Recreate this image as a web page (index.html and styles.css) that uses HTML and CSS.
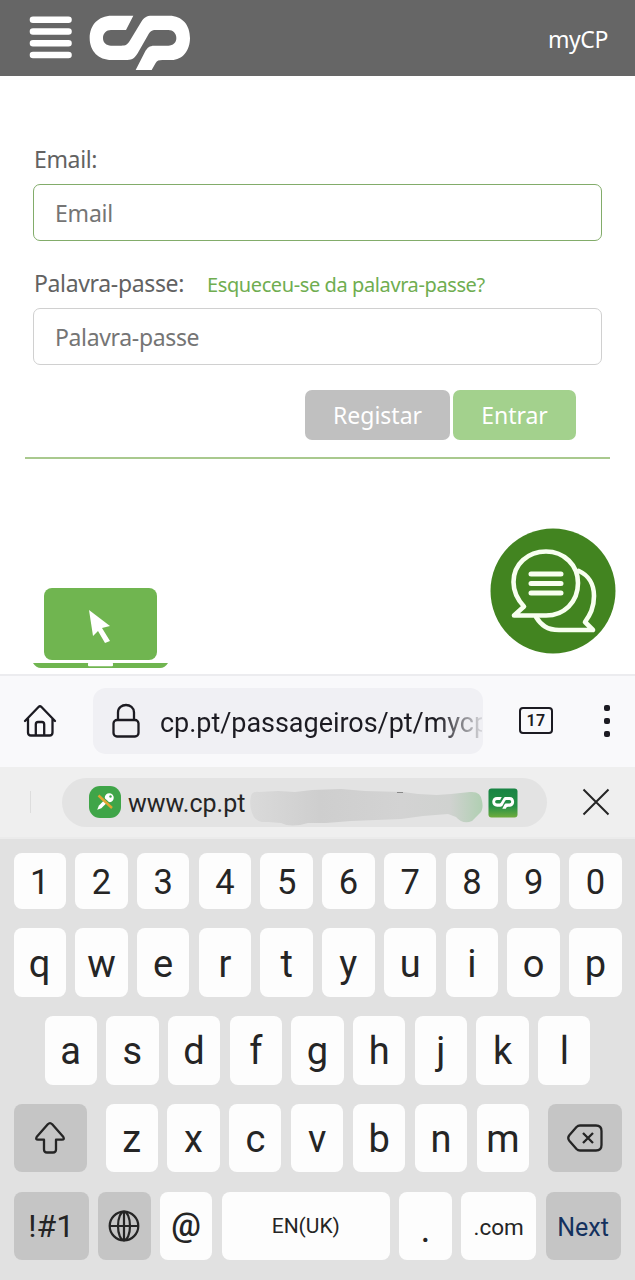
FILE: index.html
```
<!DOCTYPE html>
<html lang="pt">
<head>
<meta charset="utf-8">
<title>myCP</title>
<link rel="stylesheet" href="styles.css">
</head>
<body>
<header class="header">
  <svg class="burger" width="44" height="46" viewBox="0 0 44 46"><path d="M4 4.700H39.500M4 16.500H39.500M4 28.200H39.500M4 40H39.500" stroke="#fff" stroke-width="6.600" stroke-linecap="round"/></svg>
  <svg class="logo" width="102" height="56" viewBox="267 46 306 168"><path fill="#fff" d="M400 48H335C295 48 269 76 269 115C269 154 295 181 335 181H382C398 181 405 174 413 161L443 108C450 96 455 91 467 91H505C519 91 529 101 529 115C529 129 519 138 505 138H463C448 138 442 144 435 156L407 211H455L467 190C471 183 477 181 487 181H515C547 181 570 153 570 115C570 76 547 48 508 48H455C440 48 432 53 424 66L389 124C382 135 377 138 364 138H333C319 138 309 129 309 115C309 101 319 91 333 91H378Z"/></svg>
  <span class="account">myCP</span>
</header>
<main class="page">
  <form class="login">
    <label class="label email-label">Email:</label>
    <div class="field active"><span class="ph-email">Email</span></div>
    <div class="row"><label class="label pass-label">Palavra-passe:</label><a class="forgot">Esqueceu-se da palavra-passe?</a></div>
    <div class="field"><span class="ph-pass">Palavra-passe</span></div>
    <div class="buttons"><span class="btn register">Registar</span><span class="btn enter">Entrar</span></div>
  </form>
  <svg class="laptop" width="136" height="84" viewBox="0 0 136 84"><rect x="11" y="1" width="113" height="72" rx="8" fill="#70b550"/><path d="M0 76H135Q132 81 127 81H8Q3 81 0 76Z" fill="#70b550"/><rect x="55" y="75.500" width="25" height="3.700" rx="1" fill="#fff"/><path fill="#fff" d="M56 23L77 39L69 41L77 54L72 56L65 44L60 49Z"/></svg>
  <svg class="chat" width="126" height="126" viewBox="0 0 126 126"><circle cx="63" cy="63" r="62.500" fill="#428420"/><g fill="none" stroke="#f8fff0" stroke-width="4.600" stroke-linejoin="round" stroke-linecap="round"><path d="M24 87.500L34 78.500C27 71 23.500 63 23.500 54C23.500 36 38 23.500 56 23.500C74 23.500 88 37 88 55C88 74 74 88 55 87.500Z"/><path d="M89 43C98 47 104 56 104 68C104 80 100 87 95 94L103 102H69C57 102 51 97 46 89"/><path d="M41 46H71M41 55.500H71M41 65H71" stroke-width="5"/></g></svg>
</main>
<nav class="browser">
  <svg class="home" width="34" height="34" viewBox="0 0 34 34" fill="none" stroke="#1c1b22" stroke-width="2.300" stroke-linecap="round" stroke-linejoin="round"><path d="M2 17L15.500 3Q17 1.600 18.500 3L32 17M5 14.500V28.500Q5 31.500 8 31.500H26.500Q29.500 31.500 29.500 28.500V14.500M12.800 31V20.500Q12.800 18 15 18H19Q21.200 18 21.200 20.500V31"/></svg>
  <div class="address"><svg width="28" height="36" viewBox="0 0 28 36" fill="none" stroke="#1c1b22" stroke-width="2.300"><rect x="1.500" y="17" width="25" height="16.500" rx="3.500"/><path d="M6 17V9.500C6 -0.500 22 -0.500 22 9.500V17"/></svg><span class="url">cp.pt/passageiros/pt/mycp</span></div>
  <span class="tabs">17</span>
  <span class="dots"><i></i><i></i><i></i></span>
</nav>
<section class="suggest">
  <i class="divider"></i>
  <div class="pill">
    <svg class="keyicon" width="32" height="32" viewBox="0 0 32 32"><rect width="32" height="32" rx="11" fill="#3fa548"/><g transform="rotate(45 16 16)" fill="#fff"><circle cx="16" cy="10" r="4.500"/><path d="M14.200 13H17.800V23L16 27L14.200 23Z"/></g><circle cx="21.500" cy="10.500" r="1.200" fill="#3fa548"/><path d="M10 8.500L24 21" stroke="#3fa548" stroke-width="2"/><path d="M9.500 9.500L23 22" stroke="#e1a632" stroke-width="2.400"/></svg>
    <span class="site">www.cp.pt</span>
    <svg class="smudge" width="234" height="38" viewBox="0 0 234 38"><defs><linearGradient id="s"><stop stop-color="#dadada"/><stop offset=".3" stop-color="#cecece"/><stop offset=".65" stop-color="#d3d3d3"/><stop offset=".86" stop-color="#d0d2d0"/><stop offset="1" stop-color="#b0cfb2"/></linearGradient></defs><path fill="url(#s)" d="M1 8Q2 3 9 4L28 3L45 4L62 2L91 1L115 3L153 4L168 6L187 7L201 6L220 4Q231 3 232 13Q234 22 229 26L222 33Q213 37 206 29L198 26L173 28L151 31L126 32L101 33L76 35L58 35Q41 40 31 35L18 34Q5 35 2 25Q-1 17 1 8Z"/><path d="M147 4.500H153" stroke="#888" stroke-width="1"/></svg>
    <svg class="cpicon" width="30" height="30" viewBox="0 0 30 30"><defs><linearGradient id="g" x2="0" y2="1"><stop stop-color="#188344"/><stop offset=".62" stop-color="#269045"/><stop offset="1" stop-color="#6fac3d"/></linearGradient></defs><rect x=".5" y=".5" width="29" height="29" rx="3" fill="url(#g)"/><g transform="translate(-15.300 5.500) scale(.0727)"><path fill="#fff" d="M400 48H335C295 48 269 76 269 115C269 154 295 181 335 181H382C398 181 405 174 413 161L443 108C450 96 455 91 467 91H505C519 91 529 101 529 115C529 129 519 138 505 138H463C448 138 442 144 435 156L407 211H455L467 190C471 183 477 181 487 181H515C547 181 570 153 570 115C570 76 547 48 508 48H455C440 48 432 53 424 66L389 124C382 135 377 138 364 138H333C319 138 309 129 309 115C309 101 319 91 333 91H378Z"/></g></svg>
  </div>
  <svg class="close" width="28" height="28" viewBox="0 0 28 28"><path d="M1.500 1.500L26.500 26.500M26.500 1.500L1.500 26.500" stroke="#252525" stroke-width="2"/></svg>
</section>
<section class="keyboard">
  <div class="keys digits"><b>1</b><b>2</b><b>3</b><b>4</b><b>5</b><b>6</b><b>7</b><b>8</b><b>9</b><b>0</b></div>
  <div class="keys"><b>q</b><b>w</b><b>e</b><b>r</b><b>t</b><b>y</b><b>u</b><b>i</b><b>o</b><b>p</b></div>
  <div class="keys home-row"><b>a</b><b>s</b><b>d</b><b>f</b><b>g</b><b>h</b><b>j</b><b>k</b><b>l</b></div>
  <div class="keys shift-row"><b class="dark"><svg width="32" height="34" viewBox="0 0 32 34" fill="none" stroke="#252525" stroke-width="2.300" stroke-linejoin="round"><path d="M13.800 3.200Q16 1 18.200 3.200L29.200 15.800Q30.800 18.700 28 18.700H22V28.500Q22 31.500 19 31.500H13Q10 31.500 10 28.500V18.700H4Q1.200 18.700 2.800 15.800Z"/></svg></b><div class="mid"><b>z</b><b>x</b><b>c</b><b>v</b><b>b</b><b>n</b><b>m</b></div><b class="dark"><svg width="36" height="28" viewBox="0 0 36 28" fill="none" stroke="#252525" stroke-width="2.300" stroke-linejoin="round"><path d="M13 1.500H29Q34.500 1.500 34.500 7V21Q34.500 26.500 29 26.500H13Q11 26.500 9.500 25L2.500 17Q0 14 2.500 11L9.500 3Q11 1.500 13 1.500Z"/><path d="M16 9L26 19M26 9L16 19"/></svg></b></div>
  <div class="keys bottom"><b class="dark symbols">!#1</b><b class="dark"><svg width="32" height="32" viewBox="0 0 32 32" fill="none" stroke="#252525" stroke-width="2.200"><circle cx="16" cy="16" r="14.300"/><ellipse cx="16" cy="16" rx="6" ry="14.300"/><path d="M16 1.700V30.300M1.700 16H30.300"/></svg></b><b class="at">@</b><b class="space">EN(UK)</b><b class="dot">.</b><b class="com">.com</b><b class="dark next">Next</b></div>
</section>
</body>
</html>
```

FILE: styles.css
```
* { box-sizing: border-box; }
body { margin: 0; width: 635px; height: 1280px; overflow: hidden; background: #fff; font-family: Roboto, sans-serif; color: #252525; }
svg { display: block; flex: none; }
span, a, label { white-space: nowrap; }

.header { height: 76px; background: #666; display: flex; align-items: flex-start; padding: 15px 27px 0 29px; font-family: "Noto Sans", sans-serif; }
.logo { margin-left: 16px; }
.account { margin-left: auto; color: #fff; font-size: 23px; line-height: 48px; letter-spacing: -0.4px; }

.page { height: 598px; position: relative; padding: 66px 25px 0; font-family: "Noto Sans", sans-serif; color: #626262; }
.login { height: 317px; border-bottom: 2px solid #a9c98e; padding: 0 8px; }
.label { display: block; font-size: 23px; line-height: 34px; padding-left: 1px; }
.email-label { letter-spacing: -0.35px; }
.field { height: 57px; border: 1px solid #d0d0d0; border-radius: 7px; padding-left: 21px; font-size: 23px; line-height: 57px; color: #757575; }
.field.active { border-color: #82ac6a; }
.login > .email-label { margin-bottom: 8px; }
.ph-email { letter-spacing: -0.2px; }
.row { display: flex; margin-top: 25px; height: 42px; }
.pass-label { letter-spacing: -0.35px; width: 173px; }
.ph-pass { letter-spacing: -0.35px; }
.forgot { font-size: 20px; line-height: 37px; letter-spacing: -0.4px; padding-left: 1px; color: #6fad50; }
.buttons { display: flex; justify-content: flex-end; gap: 3px; padding: 25px 26px 0 0; }
.btn { height: 50px; border-radius: 7px; color: #fff; font-size: 23px; line-height: 51px; text-align: center; }
.register { width: 145px; background: #c0c0c0; }
.enter { width: 123px; background: #a3d18d; }
.laptop { margin: 128px 0 0 8px; }
.chat { position: absolute; left: 490px; top: 452px; }

.browser { height: 93px; background: #f9f9fb; border-top: 2px solid #ececef; display: flex; align-items: center; padding: 0 24px 2px 23px; }
.address { margin-left: 36px; width: 390px; height: 66px; border-radius: 13px; background: #f0f0f4; display: flex; align-items: center; padding-left: 19px; overflow: hidden; }
.url { margin-left: 20px; width: 322px; overflow: hidden; font-size: 27px; line-height: 40px; padding-top: 5px; letter-spacing: -0.04px; color: transparent; background: linear-gradient(90deg, #1c1b22 86%, #d8d8dc 100%); background-clip: text; -webkit-background-clip: text; }
.tabs { margin-left: 36px; width: 34px; height: 27px; border: 2px solid #1c1b22; border-radius: 4px; text-align: center; font-size: 16px; line-height: 23px; font-weight: 600; letter-spacing: 0.4px; color: #1c1b22; }
.dots { margin-left: 50px; width: 8px; display: grid; gap: 7px; justify-items: center; }
.dots i { width: 6px; height: 6px; border-radius: 2px; background: #1c1b22; }

.suggest { height: 72px; background: #efefef; display: flex; align-items: center; padding-left: 30px; border-bottom: 2px solid #ebebeb; }
.divider { width: 1px; height: 22px; background: #ddd; }
.pill { margin-left: 31px; width: 485px; height: 49px; border-radius: 25px; background: #e3e3e3; display: flex; align-items: center; padding-left: 27px; }
.site { margin-left: 7px; width: 117px; font-size: 25px; letter-spacing: 0; line-height: 49px; padding-top: 3px; }
.smudge { margin-left: 5px; margin-top: 10px; }
.cpicon { margin-left: 4px; margin-top: 1px; }
.close { margin-left: 35px; }

.keyboard { height: 441px; background: #e1e1e1; padding: 14px 13.5px 0; display: flex; flex-direction: column; gap: 19.3px; }
.keys { display: grid; grid-template-columns: repeat(10, 1fr); gap: 9.4px; height: 68.5px; flex: none; }
.keys b { font-weight: 400; background: #fdfdfd; border-radius: 8px; display: flex; align-items: center; justify-content: center; font-size: 38px; line-height: 1; padding-top: 2px; }
.keys.digits { height: 56px; }
.digits b { font-size: 34.500px; padding-top: 3px; }
.home-row { grid-template-columns: repeat(9, 1fr); padding: 0 31px; }
.home-row b { padding-top: 1px; }
.keys.shift-row { grid-template-columns: 73.500px 423.500px 74px; gap: 18.500px; }
.mid { display: grid; grid-template-columns: repeat(7, 1fr); gap: 9.700px; }
.mid b { padding-top: 1px; }
.keys.bottom { grid-template-columns: 75.500px 52.500px 52.500px 168.500px 52.500px 75.500px 75px; gap: 9.200px; }
.keys .dark { background: #c5c5c5; padding-top: 0; }
.keys .symbols { font-size: 32px; }
.keys .at { font-size: 33px; font-weight: 500; padding-top: 0; padding-bottom: 3px; }
.keys .space { font-size: 21px; padding-top: 2px; }
.keys .dot { padding-top: 7px; }
.keys .com { font-size: 22.500px; padding-top: 3px; }
.keys .next { font-size: 25px; padding-top: 3px; color: #14315e; }
```
